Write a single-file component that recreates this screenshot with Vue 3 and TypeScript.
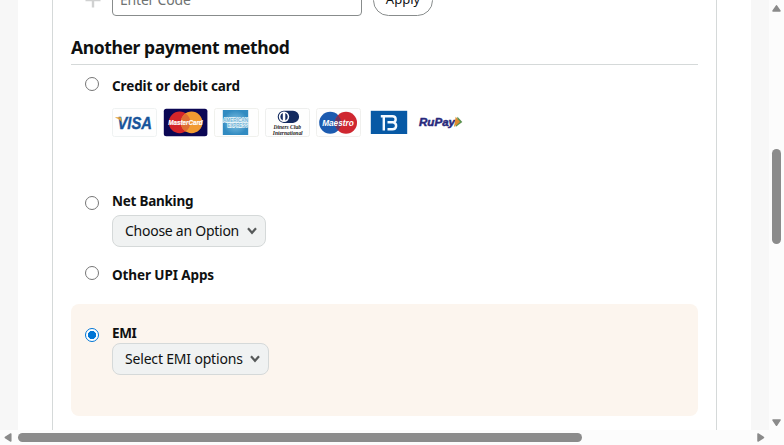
<script setup lang="ts">
import { ref } from 'vue'

type Method = 'card' | 'netbanking' | 'upi' | 'emi'
const selected = ref<Method>('emi')
</script>

<template>
  <div class="viewport">
    <div class="page">
      <div class="sheet">
        <main class="panel">
          <div class="coupon">
            <svg class="plus" width="16" height="16" viewBox="0 0 16 16">
              <path d="M8 0.5V15.5M0.5 8H15.5" stroke="#d0d1d1" stroke-width="2.4" />
            </svg>
            <div class="code"><span>Enter Code</span></div>
            <button class="apply"><span>Apply</span></button>
          </div>
          <h2><span>Another payment method</span></h2>

          <section class="row card">
            <input v-model="selected" type="radio" name="method" value="card" />
            <div class="body">
              <div class="label l-card">Credit or debit card</div>
              <div class="logos">
                <svg width="45" height="29" viewBox="0 0 45 29">
                  <rect x=".5" y=".5" width="44" height="28" rx="2" fill="#fefefe" stroke="#eff2f2" />
                  <text x="5.5" y="20.7" font-size="16.5" fill="#17549a" stroke="#17549a" stroke-width=".4" textLength="34.5" lengthAdjust="spacingAndGlyphs" class="sans">VISA</text>
                  <path d="M3.4 9.2h5.4l1.6 6.2C9.3 12.6 7 10.6 3.4 9.7z" fill="#dfa23a" />
                </svg>
                <svg width="45" height="29" viewBox="0 0 45 29">
                  <rect x=".8" y=".8" width="43.6" height="27.4" rx="2.5" fill="#0b0754" />
                  <circle cx="16.6" cy="14.4" r="10.8" fill="#d32529" />
                  <circle cx="28.6" cy="14.4" r="10.8" fill="#f19b31" />
                  <path d="M22.6 5.4a10.8 10.8 0 0 1 0 18a10.8 10.8 0 0 1 0-18z" fill="#de6e33" />
                  <text x="5.2" y="17.4" font-size="7.6" fill="#fff" stroke="#fff" stroke-width=".2" textLength="34.5" lengthAdjust="spacingAndGlyphs" class="sans">MasterCard</text>
                </svg>
                <svg width="45" height="29" viewBox="0 0 45 29">
                  <defs>
                    <radialGradient id="amex"><stop offset="0" stop-color="#8bc7e6" /><stop offset="1" stop-color="#318bc1" /></radialGradient>
                  </defs>
                  <rect x=".5" y=".5" width="44" height="28" rx="2" fill="#fefefe" stroke="#f0f1ed" />
                  <rect x="8.8" y="2" width="25.4" height="25" fill="url(#amex)" />
                  <text x="9" y="13.6" font-size="6" fill="#6db0d5" stroke="#edf8fb" stroke-width="1.4" paint-order="stroke" textLength="25" lengthAdjust="spacingAndGlyphs" class="upright">AMERICAN</text>
                  <text x="13.5" y="19.4" font-size="6" fill="#6db0d5" stroke="#edf8fb" stroke-width="1.4" paint-order="stroke" textLength="20.5" lengthAdjust="spacingAndGlyphs" class="upright">EXPRESS</text>
                </svg>
                <svg width="45" height="29" viewBox="0 0 45 29">
                  <rect x=".5" y=".5" width="44" height="28" rx="2" fill="#fefefe" stroke="#eeefee" />
                  <path d="M18.8 2.7H28a5.9 5.9 0 0 1 0 12.2H18.8a6.1 6.1 0 0 1 0-12.2z" fill="#142b60" />
                  <circle cx="19" cy="8.8" r="5.2" fill="#fff" />
                  <path d="M17.8 5.1v7.4a4 4 0 0 1 0-7.4zM20.3 5.1v7.4a4 4 0 0 0 0-7.4z" fill="#142b60" />
                  <text x="8.5" y="21.3" font-size="6.2" textLength="27.5" lengthAdjust="spacingAndGlyphs" class="serif">Diners Club</text>
                  <text x="7.8" y="27" font-size="6" textLength="29.8" lengthAdjust="spacingAndGlyphs" class="serif">International</text>
                </svg>
                <svg width="45" height="29" viewBox="0 0 45 29">
                  <rect x=".5" y=".5" width="44" height="28" rx="2" fill="#fefefe" stroke="#f0f0ee" />
                  <circle cx="14.2" cy="14.8" r="11" fill="#1c5bb0" />
                  <circle cx="30" cy="14.8" r="11" fill="#cf2730" />
                  <path d="M22.1 7.2a11 11 0 0 1 0 15.2a11 11 0 0 1 0-15.2z" fill="#6c3561" />
                  <text x="6.2" y="18" font-size="9" fill="#fff" textLength="31.5" lengthAdjust="spacingAndGlyphs" class="sans">Maestro</text>
                </svg>
                <svg width="45" height="29" viewBox="0 0 45 29">
                  <rect x="3.8" y="2.8" width="36.4" height="23.2" fill="#0759a5" />
                  <path d="M13.8 8.2H25.5c4.2 0 4 5.4.8 6.1c4 1 3.8 7-.9 7H20.5M20.5 14.3H26M16.8 8.2V22.4" fill="none" stroke="#f5faff" stroke-width="2.4" stroke-linejoin="round" />
                </svg>
                <svg width="45" height="29" viewBox="0 0 45 29">
                  <text x="1" y="17.8" font-size="11.5" fill="#28297c" stroke="#28297c" stroke-width=".5" textLength="36" lengthAdjust="spacingAndGlyphs" class="sans">RuPay</text>
                  <path d="M39.5 8.8l4.8 5.2l-6.6 4.9z" fill="#5b9150" />
                  <path d="M37.7 8.8l4.4 5.2l-6.2 4.9z" fill="#df8d31" />
                </svg>
              </div>
            </div>
          </section>

          <section class="row net">
            <input v-model="selected" type="radio" name="method" value="netbanking" />
            <div class="body">
              <div class="label l-net">Net Banking</div>
              <button class="select s-net">
                <span>Choose an Option</span>
                <svg width="10" height="8" viewBox="0 0 10 8"><path d="M1 1.3L5 5.8L9 1.3" /></svg>
              </button>
            </div>
          </section>

          <section class="row upi">
            <input v-model="selected" type="radio" name="method" value="upi" />
            <div class="body"><div class="label l-upi">Other UPI Apps</div></div>
          </section>

          <section class="row emi">
            <input v-model="selected" type="radio" name="method" value="emi" />
            <div class="body">
              <div class="label l-emi">EMI</div>
              <button class="select s-emi">
                <span>Select EMI options</span>
                <svg width="10" height="8" viewBox="0 0 10 8"><path d="M1 1.3L5 5.8L9 1.3" /></svg>
              </button>
            </div>
          </section>
        </main>
      </div>
    </div>

    <div class="vbar">
      <svg width="9" height="8" viewBox="0 0 9 8"><path d="M4.5 1.8L8 7H1z" /></svg>
      <div class="vthumb"></div>
      <svg width="9" height="8" viewBox="0 0 9 8"><path d="M4.5 6.3L8 1H1z" /></svg>
    </div>
    <div class="hbar">
      <svg width="8" height="9" viewBox="0 0 8 9"><path d="M1.3 4.5L6.8 1V8z" /></svg>
      <div class="hthumb"></div>
      <svg width="8" height="9" viewBox="0 0 8 9"><path d="M6.5 4.5L1 1V8z" /></svg>
    </div>
  </div>
</template>

<style>
body { margin: 0; overflow: hidden; }
</style>

<style scoped>
* { box-sizing: border-box; }
.viewport {
  display: grid;
  grid-template: 430px 15px / 769px 15px;
  width: 784px;
  height: 445px;
  background: #fcfcfc;
  color: #0f1111;
  font-family: "Noto Sans", "Open Sans", sans-serif;
  font-size: 14px;
}
.page { padding: 0 18px; background: #f7f7f7; overflow: hidden; }
.sheet { height: 430px; padding: 0 34px; background: #fff; }
.panel {
  width: 665px;
  height: 430px;
  padding: 0 18px;
  border: solid #d5d9d9;
  border-width: 0 1px;
}
.coupon { display: flex; align-items: flex-end; height: 16px; padding-left: 14px; overflow: hidden; }
.plus { flex: none; margin: 0 11px 8px 0; }
.code {
  flex: none;
  display: flex;
  align-items: center;
  width: 250px;
  height: 31px;
  padding: 0 7px 2px;
  border: 1px solid #888c8c;
  border-radius: 4px;
  color: #6f7373;
}
.code span { letter-spacing: -0.2px; }
.apply {
  flex: none;
  width: 60px;
  height: 31px;
  margin-left: 11px;
  padding: 0 0 3px;
  border: 1px solid #888c8c;
  border-radius: 16px;
  background: #fff;
  color: #0f1111;
  font: 13px/26px "Noto Sans", sans-serif;
}
h2 {
  height: 49px;
  margin: 0;
  padding-top: 19px;
  border-bottom: 1px solid #d5d9d9;
  font-size: 17.5px;
  line-height: 24px;
  font-weight: 700;
  white-space: nowrap;
}
h2 span { letter-spacing: -0.4px; }
.row { display: flex; gap: 13px; padding-left: 14px; }
.card { height: 125px; padding-top: 11px; }
.net { height: 72px; padding-top: 1px; }
.upi { height: 42px; padding-top: 3px; }
.emi { height: 112px; padding-top: 19px; border-radius: 8px; background: #fcf5ee; }
input {
  flex: none;
  appearance: none;
  width: 14px;
  height: 14px;
  margin: 1px 0 0;
  border: 1px solid #767676;
  border-radius: 50%;
  background: #fff;
}
.net input, .emi input { margin-top: 5px; }
input:checked {
  border-color: #0075d5;
  background: radial-gradient(circle, #0075d5 0 3.8px, #fff 4.4px);
}
.label { height: 20px; font-size: 13.5px; line-height: 20px; font-weight: 700; white-space: nowrap; }
.l-card { letter-spacing: -0.12px; }
.l-net { letter-spacing: -0.25px; }
.l-upi { letter-spacing: -0.1px; }
.l-emi { letter-spacing: -0.4px; }
.logos { display: flex; gap: 6px; margin-top: 12px; }
.logos svg { display: block; }
.sans { font-family: "Liberation Sans", sans-serif; font-weight: 700; font-style: italic; }
.upright { font-family: "Liberation Sans", sans-serif; font-weight: 700; }
.serif { font-family: "Liberation Serif", serif; font-weight: 700; font-style: italic; fill: #202020; }
.select {
  display: flex;
  align-items: center;
  justify-content: space-between;
  height: 32px;
  padding: 0 8px 0 12px;
  border: 1px solid #d5d9d9;
  border-radius: 8px;
  background: #f0f2f2;
  color: #0f1111;
  font: 14px/30px "Noto Sans", sans-serif;
  white-space: nowrap;
}
.select svg { flex: none; }
.select path { fill: none; stroke: #565959; stroke-width: 2.2; }
.s-net { width: 154px; margin-top: 4px; letter-spacing: -0.26px; }
.s-emi { width: 157px; letter-spacing: -0.18px; }
.vbar { display: flex; flex-direction: column; align-items: center; padding: 4px 0 3px; }
.vbar svg, .hbar svg { flex: none; fill: #8b8b8b; stroke: #8b8b8b; stroke-width: 1.5; stroke-linejoin: round; }
.vthumb { width: 9px; height: 95px; margin: 137px 0 auto; border-radius: 5px; background: #8b8b8b; }
.hbar { display: flex; align-items: center; padding: 0 4px; }
.hthumb { width: 564px; height: 9px; margin: 0 auto 0 6px; border-radius: 5px; background: #8b8b8b; }
</style>
